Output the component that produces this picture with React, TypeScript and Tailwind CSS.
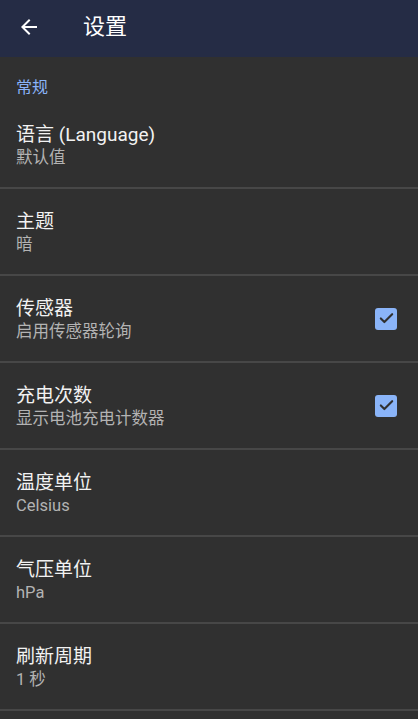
import { Check } from "lucide-react"

interface PrefItem {
  title: string
  summary: string
  checked?: boolean
}

const items: PrefItem[] = [
  { title: "语言 (Language)", summary: "默认值" },
  { title: "主题", summary: "暗" },
  { title: "传感器", summary: "启用传感器轮询", checked: true },
  { title: "充电次数", summary: "显示电池充电计数器", checked: true },
  { title: "温度单位", summary: "Celsius" },
  { title: "气压单位", summary: "hPa" },
  { title: "刷新周期", summary: "1 秒" },
]

function BackArrow() {
  return (
    <svg width="24" height="24" viewBox="0 0 24 24" fill="#ffffff">
      <path d="M20 11H7.83l5.59-5.59L12 4l-8 8 8 8 1.41-1.41L7.83 13H20v-2z" />
    </svg>
  )
}

export default function App() {
  return (
    <div
      className="h-[719px] w-[418px] overflow-hidden bg-[#303030]"
      style={{ fontFamily: "Roboto, 'Noto Sans CJK SC', sans-serif" }}
    >
      <header className="flex h-[57px] items-center bg-[#252c45] pb-[4px] pl-[17px]">
        <BackArrow />
        <h1 className="ml-[42px] text-[22px] leading-7 text-white">设置</h1>
      </header>

      <div className="px-4 pb-[4px] pt-[21px] text-[16px] leading-5 text-[#8ab4f8]">常规</div>

      {items.map((item) => (
        <div key={item.title} className="flex items-center border-b-2 border-[#474747] pl-4 pr-[21px]">
          <div className="flex-1 pb-[18px] pt-[21px]">
            <div className="text-[19px] leading-6 text-[#f2f2f2]">{item.title}</div>
            <div className="text-[16.5px] leading-[22px] text-[#b3b3b3]">{item.summary}</div>
          </div>
          {item.checked && (
            <div className="flex h-[22px] w-[22px] items-center justify-center rounded-[3px] bg-[#8ab4f8]">
              <Check size={17} strokeWidth={3} color="#303030" />
            </div>
          )}
        </div>
      ))}
    </div>
  )
}
